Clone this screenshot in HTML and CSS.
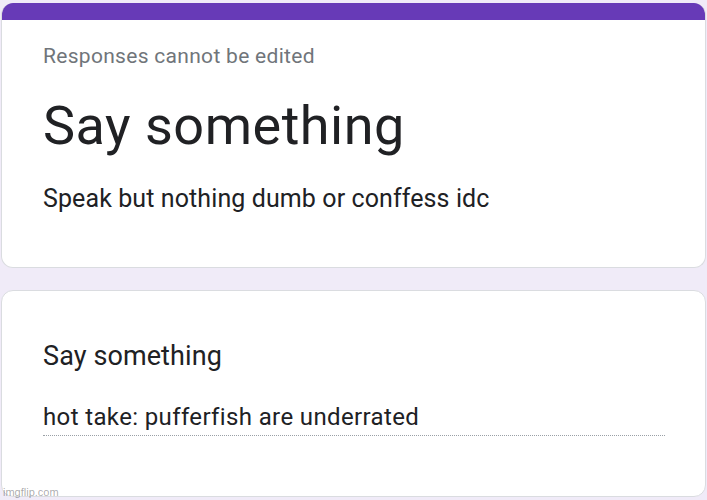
FILE: index.html
```html
<!DOCTYPE html>
<html lang="en">
<head>
    <meta charset="UTF-8">
    <meta name="viewport" content="width=device-width, initial-scale=1.0">
    <title>Say something</title>
    <link rel="stylesheet" href="styles.css">
</head>
<body>

<div class="form">
    <!-- Header card -->
    <div class="card header-card">
        <div class="accent"></div>
        <div class="header-body">
            <p class="meta">Responses cannot be edited</p>
            <h1 class="title">Say something</h1>
            <p class="description">Speak but nothing dumb or conffess idc</p>
        </div>
    </div>

    <!-- Question card -->
    <div class="card question-card">
        <div class="question">Say something</div>
        <div class="answer">hot take: pufferfish are underrated</div>
    </div>
</div>

<div class="watermark">imgflip.com</div>

</body>
</html>
```

FILE: styles.css
```css
body {
    margin: 0;
    font-family: 'Roboto', 'Liberation Sans', sans-serif;
    background-color: #f0ebf8; /* lavender page */
    color: #202124;
    height: 500px;
    overflow: hidden;
}
.form {
    display: flex;
    flex-direction: column;
    gap: 22px;
    padding: 3px 1px 0 1px;
}
.card {
    background-color: #fff;
    border: 1px solid #dadce0;
    border-radius: 12px;
    overflow: hidden;
}
.header-card {
    border-top: none;
}
.accent {
    height: 17px;
    background-color: #673ab7; /* purple top bar */
}
.header-body {
    padding: 22px 41px 52px;
}
.meta {
    margin: 0;
    font-size: 21px;
    line-height: 28px;
    letter-spacing: 0.3px;
    color: #70757a;
}
.title {
    margin: 24px 0 0;
    font-size: 54px;
    line-height: 64px;
    font-weight: 400;
    letter-spacing: 0.5px;
}
.description {
    margin: 25px 0 0;
    font-size: 25px;
    line-height: 32px;
    letter-spacing: 0.1px;
}
.question-card {
    padding: 47px 41px 60px;
    height: 207px;
    box-sizing: border-box;
}
.question {
    font-size: 27px;
    line-height: 36px;
    letter-spacing: 0.1px;
}
.answer {
    margin-top: 27px;
    width: 622px;
    padding-bottom: 2px;
    font-size: 24px;
    line-height: 32px;
    letter-spacing: 0.37px;
    border-bottom: 1px dotted #9aa0a6;
}
/* imgflip watermark over the corner */
.watermark {
    position: absolute;
    left: 3px;
    bottom: 2px;
    font-family: 'Liberation Sans', sans-serif;
    font-size: 11px;
    color: rgba(0, 0, 0, 0.35);
}
```
